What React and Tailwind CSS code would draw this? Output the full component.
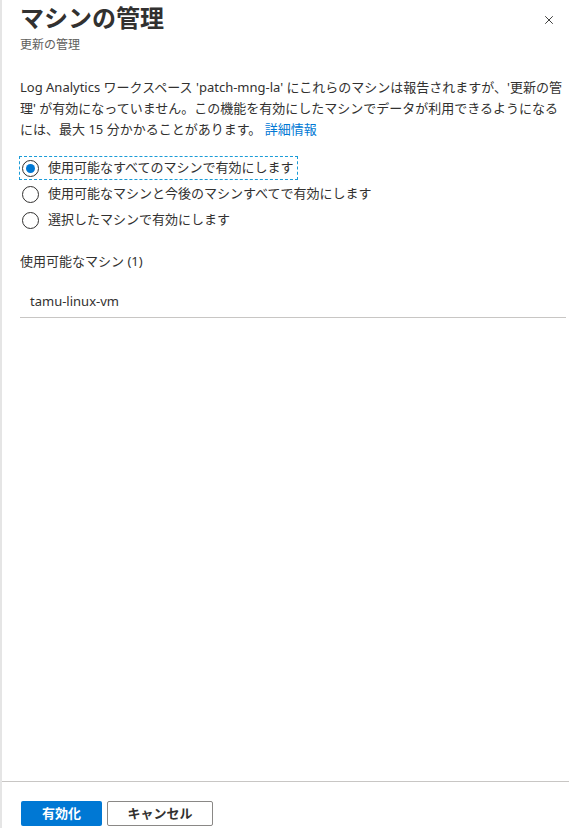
import React, { useState } from "react";
import { X } from "lucide-react";

const options = [
  "使用可能なすべてのマシンで有効にします",
  "使用可能なマシンと今後のマシンすべてで有効にします",
  "選択したマシンで有効にします",
];

const Radio = ({ label, checked, focused, onChange }) => (
  <label
    className={`flex items-center h-[22px] w-fit pl-[2px] pr-[3px] cursor-pointer ${
      focused ? "outline outline-1 outline-dashed outline-[#1a9bd7]" : ""
    }`}
    onClick={onChange}
  >
    <span
      className={`w-[17px] h-[17px] rounded-full border border-[#323130] flex items-center justify-center ${
        checked ? "border-[#0078d4]" : ""
      }`}
    >
      {checked && <span className="w-[9px] h-[9px] rounded-full bg-[#0078d4]" />}
    </span>
    <span className="ml-[9px] text-[13px] text-[#323130]">{label}</span>
  </label>
);

export default function App() {
  const [selected, setSelected] = useState(0);

  return (
    <div
      className="h-[828px] w-[569px] bg-white border-l-2 border-[#e5e5e5] flex flex-col overflow-hidden"
      style={{ fontFamily: '"Noto Sans", "Noto Sans CJK JP", sans-serif' }}
    >
      {/* Header */}
      <div className="flex items-start justify-between pl-[18px] pr-[13px] pt-[1px]">
        <div>
          <h1 className="text-[24px] font-bold text-[#323130] leading-[34px]">
            マシンの管理
          </h1>
          <p className="text-[12px] text-[#605e5c] leading-[18px] mt-[1px]">更新の管理</p>
        </div>
        <button className="mt-[12px] text-[#323130]">
          <X className="w-[14px] h-[14px]" strokeWidth={1.6} />
        </button>
      </div>

      {/* Body */}
      <div className="flex-1 pl-[18px] pr-[3px] pt-[23px]">
        <p className="text-[13px] leading-[21px] text-[#323130]">
          Log Analytics ワークスペース 'patch-mng-la' にこれらのマシンは報告されますが、'更新の管
          <br />
          理' が有効になっていません。この機能を有効にしたマシンでデータが利用できるようになる
          <br />
          には、最大 15 分かかることがあります。 <span className="text-[#0078d4]">詳細情報</span>
        </p>

        <div className="mt-[17px] flex flex-col gap-[4px]">
          {options.map((o, i) => (
            <Radio
              key={o}
              label={o}
              checked={selected === i}
              focused={i === 0}
              onChange={() => setSelected(i)}
            />
          ))}
        </div>

        <div className="mt-[20px] text-[13px] text-[#323130] leading-[20px]">
          使用可能なマシン (1)
        </div>
        <div className="mt-[20px] border-b border-[#c8c6c4] h-[27px] pl-[10px] text-[13px] text-[#323130] leading-[20px]">
          tamu-linux-vm
        </div>
      </div>

      {/* Footer */}
      <div className="border-t border-[#c8c6c4] h-[47px] pl-[19px] pt-[19px] flex gap-[5px]">
        <button className="w-[81px] h-[25px] bg-[#0078d4] text-white text-[13px] font-bold rounded-[2px]">
          有効化
        </button>
        <button className="w-[106px] h-[25px] border border-[#8a8886] text-[#323130] text-[13px] font-bold rounded-[2px]">
          キャンセル
        </button>
      </div>
    </div>
  );
}
